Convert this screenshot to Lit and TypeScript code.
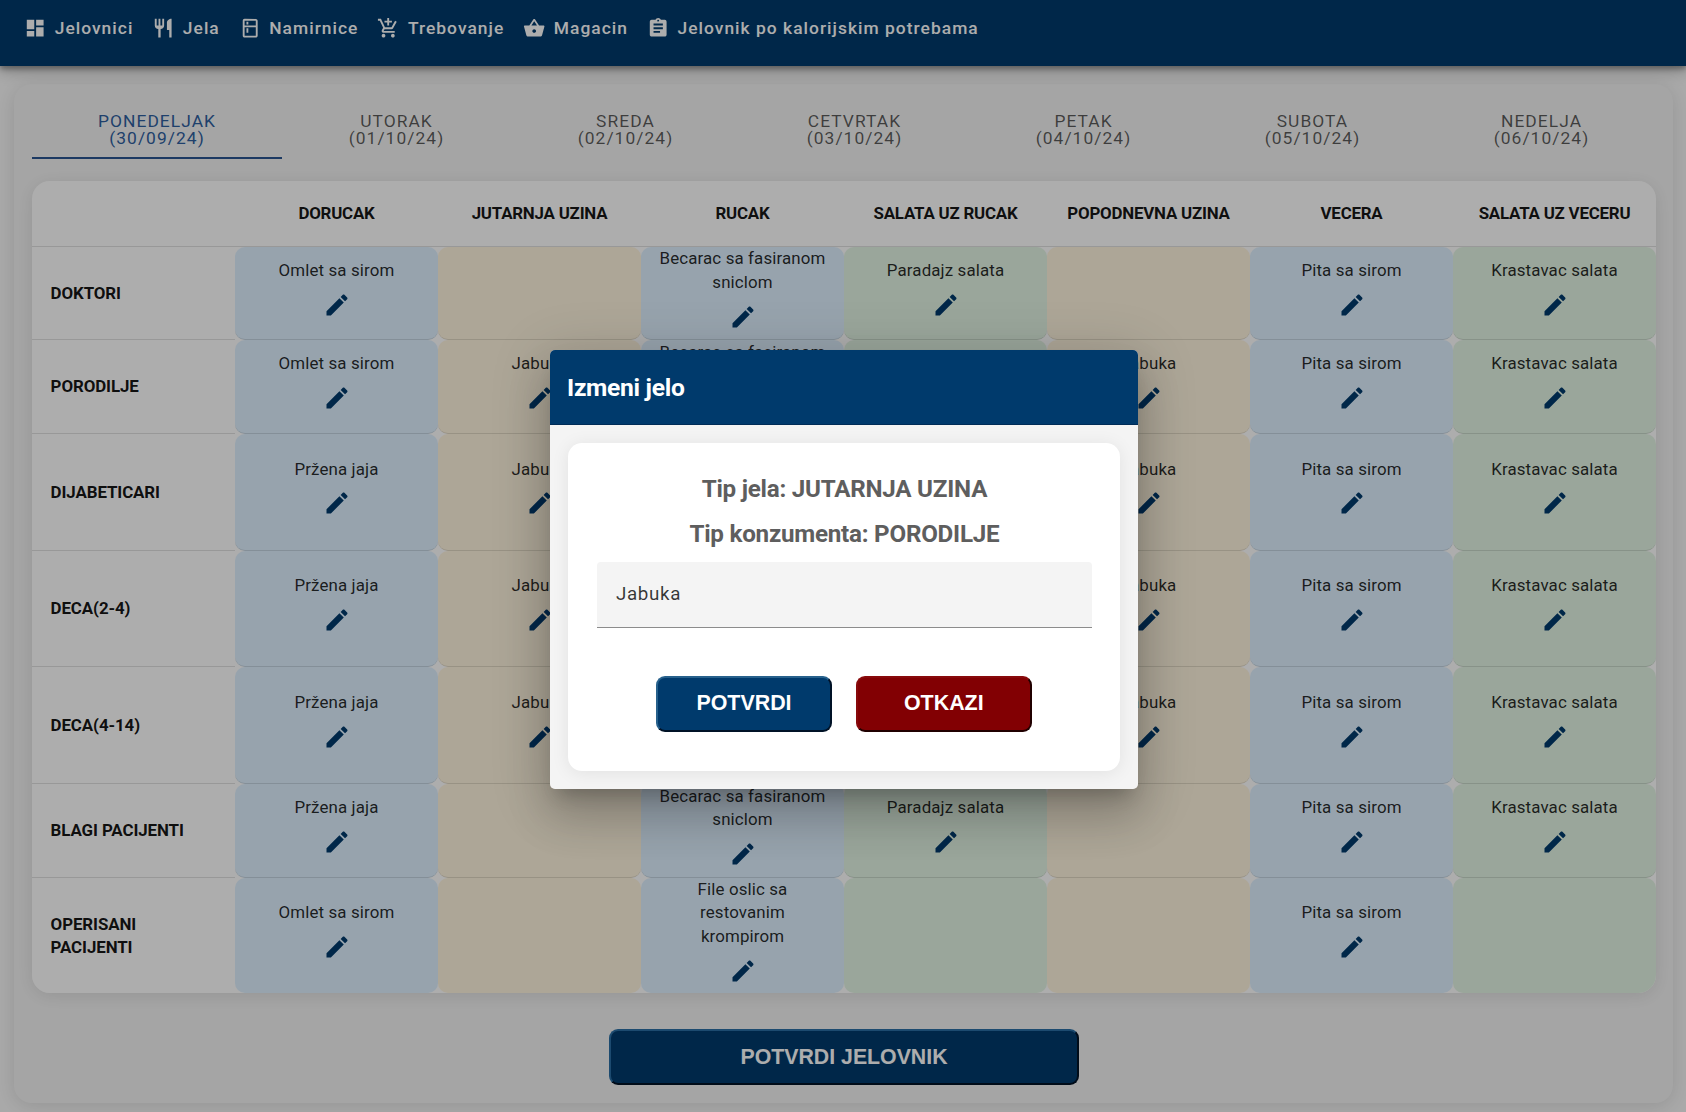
import { LitElement, html, css, svg, nothing } from "lit";
import { customElement } from "lit/decorators.js";
import { classMap } from "lit/directives/class-map.js";

const icons = {
  dashboard: "M3 13h8V3H3v10zm0 8h8v-6H3v6zm10 0h8V11h-8v10zm0-18v6h8V3h-8z",
  restaurant: "M11 9H9V2H7v7H5V2H3v7c0 2.12 1.66 3.84 3.75 3.97V22h2.5v-9.03C11.34 12.84 13 11.12 13 9V2h-2v7zm5-3v8h2.5v8H21V2c-2.76 0-5 2.24-5 4z",
  kitchen: "M18 2.01L6 2c-1.1 0-2 .89-2 2v16c0 1.1.9 2 2 2h12c1.1 0 2-.9 2-2V4c0-1.1-.9-1.99-2-1.99zM18 20H6v-9.02h12V20zm0-11H6V4h12v5zM8 5h2v3H8V5zm0 7h2v5H8v-5z",
  cart: "M11 9h2V6h3V4h-3V1h-2v3H8v2h3v3zm-4 9c-1.1 0-1.99.9-1.99 2S5.9 22 7 22s2-.9 2-2-.9-2-2-2zm10 0c-1.1 0-1.99.9-1.99 2s.89 2 1.99 2 2-.9 2-2-.9-2-2-2zm-9.83-3.25.03-.12.9-1.63h7.45c.75 0 1.41-.41 1.75-1.03l3.86-7.01L19.42 4h-.01l-1.1 2-2.76 5H8.53l-.13-.27L6.16 6l-.95-2-.94-2H1v2h2l3.6 7.59-1.35 2.45c-.16.28-.25.61-.25.96 0 1.1.9 2 2 2h12v-2H7.42c-.13 0-.25-.11-.25-.25z",
  basket: "M17.21 9l-4.38-6.56c-.19-.28-.51-.42-.83-.42-.32 0-.64.14-.83.43L6.79 9H2c-.55 0-1 .45-1 1 0 .09.01.18.04.27l2.54 9.27c.23.84 1 1.46 1.92 1.46h13c.92 0 1.69-.62 1.93-1.46l2.54-9.27L23 10c0-.55-.45-1-1-1h-4.79zM9 9l3-4.4L15 9H9zm3 8c-1.1 0-2-.9-2-2s.9-2 2-2 2 .9 2 2-.9 2-2 2z",
  assignment: "M19 3h-4.18C14.4 1.84 13.3 1 12 1c-1.3 0-2.4.84-2.82 2H5c-1.1 0-2 .9-2 2v14c0 1.1.9 2 2 2h14c1.1 0 2-.9 2-2V5c0-1.1-.9-2-2-2zm-7 0c.55 0 1 .45 1 1s-.45 1-1 1-1-.45-1-1 .45-1 1-1zm2 14H7v-2h7v2zm3-4H7v-2h10v2zm0-4H7V7h10v2z",
  edit: "M3 17.25V21h3.75L17.81 9.94l-3.75-3.75L3 17.25zM20.71 7.04c.39-.39.39-1.02 0-1.41l-2.34-2.34c-.39-.39-1.02-.39-1.41 0l-1.83 1.83 3.75 3.75 1.83-1.83z",
};

const icon = (name: keyof typeof icons) =>
  html`<svg class="icon" viewBox="0 0 24 24" aria-hidden="true">${svg`<path d=${icons[name]}></path>`}</svg>`;

const nav: [keyof typeof icons, string][] = [
  ["dashboard", "Jelovnici"],
  ["restaurant", "Jela"],
  ["kitchen", "Namirnice"],
  ["cart", "Trebovanje"],
  ["basket", "Magacin"],
  ["assignment", "Jelovnik po kalorijskim potrebama"],
];

const days = [
  ["PONEDELJAK", "30/09/24"],
  ["UTORAK", "01/10/24"],
  ["SREDA", "02/10/24"],
  ["CETVRTAK", "03/10/24"],
  ["PETAK", "04/10/24"],
  ["SUBOTA", "05/10/24"],
  ["NEDELJA", "06/10/24"],
];

const meals = ["DORUCAK", "JUTARNJA UZINA", "RUCAK", "SALATA UZ RUCAK", "POPODNEVNA UZINA", "VECERA", "SALATA UZ VECERU"];
const tones = ["main", "snack", "main", "salad", "snack", "main", "salad"];

const rows: { name: string; dishes: string[] }[] = [
  { name: "DOKTORI", dishes: ["Omlet sa sirom", "", "Becarac sa fasiranom sniclom", "Paradajz salata", "", "Pita sa sirom", "Krastavac salata"] },
  { name: "PORODILJE", dishes: ["Omlet sa sirom", "Jabuka", "Becarac sa fasiranom sniclom", "", "Jabuka", "Pita sa sirom", "Krastavac salata"] },
  { name: "DIJABETICARI", dishes: ["Pržena jaja", "Jabuka", "", "", "Jabuka", "Pita sa sirom", "Krastavac salata"] },
  { name: "DECA(2-4)", dishes: ["Pržena jaja", "Jabuka", "", "", "Jabuka", "Pita sa sirom", "Krastavac salata"] },
  { name: "DECA(4-14)", dishes: ["Pržena jaja", "Jabuka", "", "", "Jabuka", "Pita sa sirom", "Krastavac salata"] },
  { name: "BLAGI PACIJENTI", dishes: ["Pržena jaja", "", "Becarac sa fasiranom sniclom", "Paradajz salata", "", "Pita sa sirom", "Krastavac salata"] },
  { name: "OPERISANI PACIJENTI", dishes: ["Omlet sa sirom", "", "File oslic sa restovanim krompirom", "", "", "Pita sa sirom", ""] },
];

@customElement("menu-nav")
export class MenuNav extends LitElement {
  static styles = css`
    :host { display: block; }
    .bar {
      box-sizing: border-box;
      height: 66px;
      padding: 17px 24px 0;
      display: flex;
      align-items: flex-start;
      gap: 18.8px;
      background: #003a6c;
      box-shadow: 0 3px 5px rgba(0, 0, 0, 0.3), 0 5px 14px rgba(0, 0, 0, 0.25);
    }
    .item {
      display: flex;
      align-items: center;
      gap: 8.3px;
      height: 22.4px;
      color: #fff;
      font-size: 17.4px;
      font-weight: 500;
      letter-spacing: 1.03px;
      line-height: 22px;
      white-space: nowrap;
    }
    .icon { width: 22.4px; height: 22.4px; fill: currentColor; flex: none; }
  `;
  render() {
    return html`<nav class="bar">
      ${nav.map(([name, label]) => html`<span class="item">${icon(name)}<span>${label}</span></span>`)}
    </nav>`;
  }
}

@customElement("day-tabs")
export class DayTabs extends LitElement {
  static styles = css`
    :host { display: block; }
    .tabs { display: grid; grid-template-columns: 250px repeat(6, 1fr); height: 74.5px; }
    .tab {
      box-sizing: border-box;
      padding-top: 29px;
      display: flex;
      flex-direction: column;
      align-items: center;
      font-size: 17.4px;
      line-height: 17px;
      letter-spacing: 1.05px;
      color: rgba(0, 0, 0, 0.64);
    }
    .active { color: #2f5f9f; border-bottom: 2.5px solid #2a5591; }
  `;
  render() {
    return html`<div class="tabs">
      ${days.map(
        ([day, date], i) => html`<div class=${classMap({ tab: true, active: i === 0 })}><span>${day}</span><span>(${date})</span></div>`
      )}
    </div>`;
  }
}

@customElement("menu-table")
export class MenuTable extends LitElement {
  static styles = css`
    :host { display: block; }
    .table {
      display: grid;
      grid-template-columns: repeat(8, 1fr);
      grid-template-rows: 66px 93.3px 93.3px 117px 116.7px 117px 93.3px 115.4px;
      background: #fff;
      border-radius: 18px;
      overflow: hidden;
    }
    .wrap { border-radius: 18px; box-shadow: 0 3px 18px rgba(0, 0, 0, 0.1); }
    .head, .label, .cell {
      box-sizing: border-box;
      min-width: 0;
      border-bottom: 1px solid rgba(0, 0, 0, 0.12);
      display: flex;
      align-items: center;
      font-size: 16.9px;
      line-height: 23.4px;
      color: rgba(0, 0, 0, 0.84);
    }
    .head { justify-content: center; font-weight: 700; white-space: nowrap; letter-spacing: -0.22px; color: rgba(0, 0, 0, 0.92); }
    .label { padding: 1px 50px 0 18.6px; font-weight: 700; letter-spacing: -0.1px; color: rgba(0, 0, 0, 0.92); }
    .cell {
      flex-direction: column;
      justify-content: center;
      text-align: center;
      padding: 0 16px;
      letter-spacing: 0.12px;
      border-radius: 10px;
    }
    .last { border-bottom: none; }
    .main { background: #dff1ff; }
    .snack { background: #fff5df; }
    .salad { background: #e4f5e5; }
    .edit { height: 45px; display: flex; align-items: center; color: #003a6c; }
    .icon { width: 28px; height: 28px; fill: currentColor; }
  `;
  render() {
    return html`<div class="wrap"><div class="table">
      <div class="head"></div>
      ${meals.map((m) => html`<div class="head">${m}</div>`)}
      ${rows.map((row, r) => {
        const last = r === rows.length - 1;
        return html`
          <div class=${classMap({ label: true, last })}>${row.name}</div>
          ${row.dishes.map(
            (dish, i) => html`<div class=${classMap({ cell: true, [tones[i]]: true, last })}>
              ${dish ? html`<span>${dish}</span><span class="edit">${icon("edit")}</span>` : nothing}
            </div>`
          )}`;
      })}
    </div></div>`;
  }
}

@customElement("edit-dialog")
export class EditDialog extends LitElement {
  static styles = css`
    :host { display: block; }
    .dialog {
      width: 588px;
      height: 439px;
      display: flex;
      flex-direction: column;
      border-radius: 5px;
      overflow: hidden;
      background: #f4f4f4;
    }
    .shadow {
      border-radius: 5px;
      box-shadow: 0 13px 17px -8px rgba(0, 0, 0, 0.2), 0 28px 44px 3px rgba(0, 0, 0, 0.14), 0 10px 54px 9px rgba(0, 0, 0, 0.14);
    }
    .title {
      box-sizing: border-box;
      height: 75px;
      padding: 1px 17px 0;
      display: flex;
      align-items: center;
      background: #003a6c;
      border-bottom: 1px solid #002c57;
      color: #fff;
      font-size: 24.6px;
      letter-spacing: -0.3px;
      font-weight: 700;
    }
    .card {
      box-sizing: border-box;
      flex: 1;
      margin: 18px;
      padding: 24px 28.5px 0 29.3px;
      border-radius: 14px;
      background: #fff;
      box-shadow: 0 2px 18px rgba(0, 0, 0, 0.08);
      display: flex;
      flex-direction: column;
      align-items: center;
    }
    .info { height: 45px; line-height: 45px; font-size: 24.2px; letter-spacing: -0.24px; font-weight: 700; color: #5e5e5e; white-space: nowrap; }
    .field {
      box-sizing: border-box;
      width: 100%;
      height: 65.5px;
      margin-top: 5px;
      padding: 0 18.7px;
      display: flex;
      align-items: center;
      background: #f4f4f4;
      border-bottom: 1.2px solid #8c8c8c;
      border-radius: 4px 4px 0 0;
      color: rgba(0, 0, 0, 0.78);
      font-size: 18.8px;
      letter-spacing: 0.65px;
    }
    .actions { display: flex; gap: 23.3px; margin-top: 48.3px; margin-right: 1px; }
    .btn {
      box-sizing: border-box;
      width: 176.5px;
      height: 56px;
      border: 2px solid;
      border-radius: 9px;
      font: 700 21.4px "Liberation Sans", Arial, sans-serif;
      color: #fff;
    }
    .ok { background: #003a6c; border-color: #27618c #001226 #001226 #27618c; }
    .no { background: #820003; border-color: #880a0c #200000 #200000 #880a0c; }
  `;
  render() {
    return html`<div class="shadow"><div class="dialog" role="dialog">
      <div class="title">Izmeni jelo</div>
      <div class="card">
        <div class="info">Tip jela: JUTARNJA UZINA</div>
        <div class="info">Tip konzumenta: PORODILJE</div>
        <div class="field">Jabuka</div>
        <div class="actions">
          <button class="btn ok">POTVRDI</button>
          <button class="btn no">OTKAZI</button>
        </div>
      </div>
    </div></div>`;
  }
}

@customElement("app-root")
export class AppRoot extends LitElement {
  static styles = css`
    :host {
      display: block;
      position: relative;
      box-sizing: border-box;
      height: 1112px;
      overflow: hidden;
      background: #fafafa;
      font-family: Roboto, "Liberation Sans", sans-serif;
    }
    .bar { position: relative; z-index: 1; }
    .page {
      box-sizing: border-box;
      height: 1019px;
      margin: 18px 13px 0 14px;
      padding: 0 17px 0 18px;
      display: flex;
      flex-direction: column;
      border-radius: 18px;
      background: #f4f4f4;
      box-shadow: 0 3px 20px rgba(0, 0, 0, 0.13);
    }
    .plan { margin-top: 22.7px; }
    .save {
      box-sizing: border-box;
      align-self: center;
      width: 470.5px;
      height: 56.5px;
      margin-top: 35.7px;
      padding-top: 2px;
      border: 2px solid;
      border-color: #2a6ea4 #001226 #001226 #2a6ea4;
      border-radius: 9px;
      background: #003a6c;
      color: #fff;
      font: 700 21.3px "Liberation Sans", Arial, sans-serif;
    }
    .overlay {
      position: absolute;
      inset: 0;
      z-index: 2;
      padding: 350px 0 0 2px;
      display: flex;
      align-items: flex-start;
      justify-content: center;
      background: rgba(0, 0, 0, 0.32);
    }
  `;
  render() {
    return html`
      <menu-nav class="bar"></menu-nav>
      <main class="page">
        <day-tabs></day-tabs>
        <menu-table class="plan"></menu-table>
        <button class="save">POTVRDI JELOVNIK</button>
      </main>
      <div class="overlay"><edit-dialog></edit-dialog></div>
    `;
  }
}
